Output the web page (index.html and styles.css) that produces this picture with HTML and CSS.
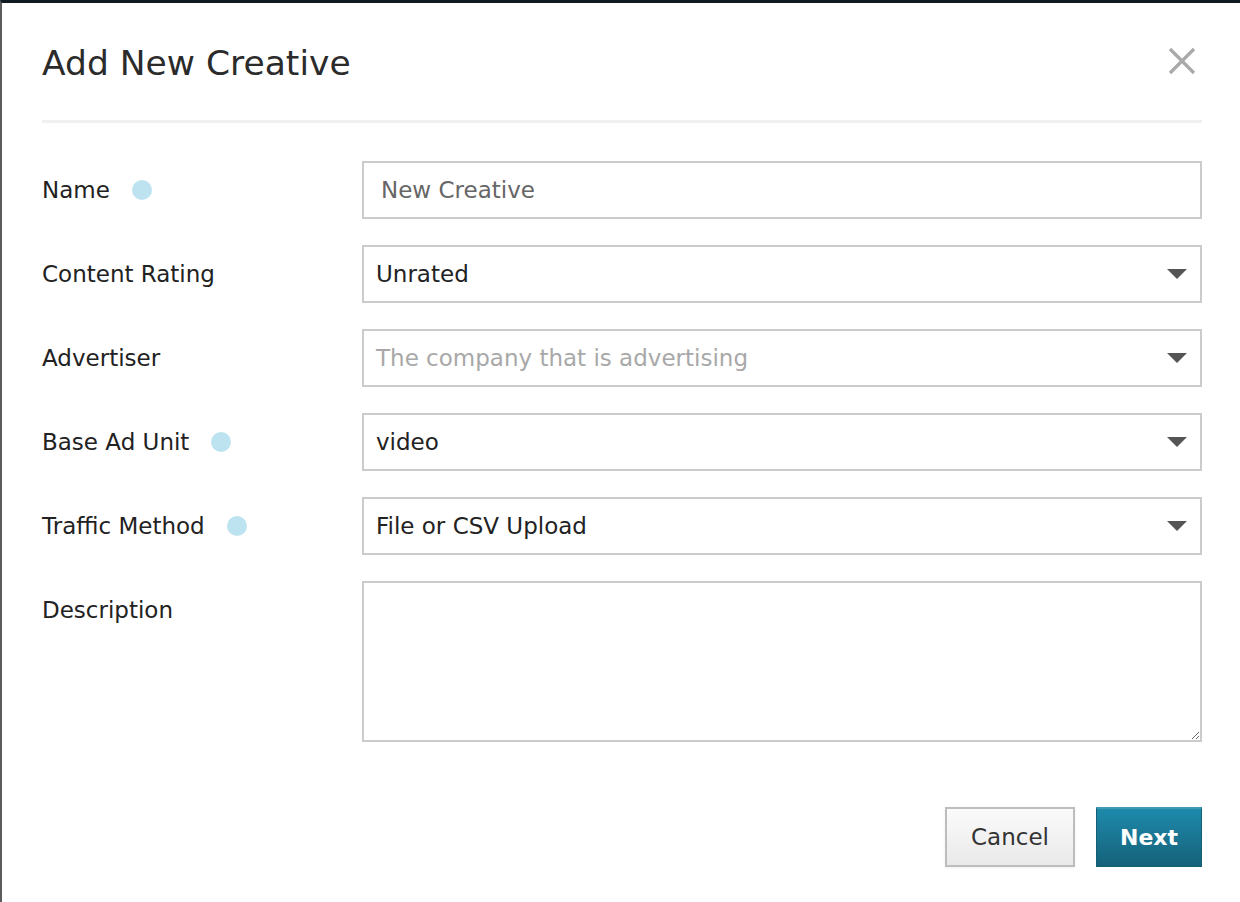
FILE: index.html
```html
<!DOCTYPE html>
<html lang="en">
<head>
<meta charset="utf-8">
<title>Add New Creative</title>
<link rel="stylesheet" href="styles.css">
</head>
<body>
<div class="modal">
  <header class="modal-header">
    <h1 class="modal-title">Add New Creative</h1>
    <button class="close" aria-label="Close">
      <svg width="28" height="28" viewBox="0 0 28 28"><path d="M2 2L26 26M26 2L2 26" stroke="#a9a9a9" stroke-width="3.2" fill="none"/></svg>
    </button>
  </header>
  <form class="form">
    <label class="label">Name <span class="dot"></span></label>
    <input class="input" type="text" value="New Creative">

    <label class="label">Content Rating</label>
    <div class="select"><span>Unrated</span><svg class="caret" width="20" height="10" viewBox="0 0 20 10"><path d="M0 0H20L10 10Z" fill="#555"/></svg></div>

    <label class="label">Advertiser</label>
    <div class="select placeholder"><span>The company that is advertising</span><svg class="caret" width="20" height="10" viewBox="0 0 20 10"><path d="M0 0H20L10 10Z" fill="#555"/></svg></div>

    <label class="label">Base Ad Unit <span class="dot"></span></label>
    <div class="select"><span>video</span><svg class="caret" width="20" height="10" viewBox="0 0 20 10"><path d="M0 0H20L10 10Z" fill="#555"/></svg></div>

    <label class="label">Traffic Method <span class="dot"></span></label>
    <div class="select"><span>File or CSV Upload</span><svg class="caret" width="20" height="10" viewBox="0 0 20 10"><path d="M0 0H20L10 10Z" fill="#555"/></svg></div>

    <label class="label label-top">Description</label>
    <textarea class="textarea"></textarea>
  </form>
  <footer class="modal-footer">
    <button class="btn btn-default" type="button">Cancel</button>
    <button class="btn btn-primary" type="button">Next</button>
  </footer>
</div>
</body>
</html>
```
FILE: styles.css
```css
html, body {
  margin: 0;
  padding: 0;
  background: #ffffff;
  height: 100%;
}
body {
  font-family: "DejaVu Sans", "Liberation Sans", sans-serif;
  color: #222;
  border-top: 3px solid #0f1b21;
  border-left: 2px solid #5c5c5c;
  box-sizing: border-box;
  overflow: hidden;
}
.modal {
  padding: 0 38px 0 40px;
}
.modal-header {
  display: flex;
  align-items: center;
  justify-content: space-between;
  height: 117px;
  border-bottom: 3px solid #f0f0f0;
  box-sizing: content-box;
}
.modal-title {
  margin: 0;
  font-weight: normal;
  font-size: 34.5px;
  color: #2b2b2b;
  padding-top: 2px;
}
.close {
  border: 0;
  background: none;
  padding: 0;
  margin-right: 6px;
  margin-bottom: 2px;
  display: flex;
}
.form {
  display: grid;
  grid-template-columns: 320px 1fr;
  grid-auto-rows: 58px;
  row-gap: 26px;
  margin-top: 38px;
}
.label {
  display: flex;
  align-items: center;
  font-size: 23px;
  color: #222;
}
.label-top {
  align-self: start;
  height: 58px;
}
.dot {
  display: inline-block;
  width: 20px;
  height: 20px;
  border-radius: 50%;
  background: #bce3ef;
  margin-left: 22px;
}
.input, .select, .textarea {
  box-sizing: border-box;
  border: 2px solid #cbcbcb;
  background: #fff;
  font-family: inherit;
  font-size: 23px;
  margin: 0;
}
.input {
  height: 58px;
  padding: 0 17px;
  color: #666;
  outline: none;
}
.select {
  display: flex;
  align-items: center;
  justify-content: space-between;
  padding: 0 13px 0 12px;
  color: #222;
}
.select.placeholder {
  color: #a8a8a8;
}
.textarea {
  grid-row: span 2;
  height: 161px;
  resize: both;
  outline: none;
}
.modal-footer {
  display: flex;
  justify-content: flex-end;
  gap: 21px;
  margin-top: 84px;
}
.btn {
  height: 60px;
  font-family: inherit;
  font-size: 23px;
  cursor: pointer;
  box-sizing: border-box;
}
.btn-default {
  width: 130px;
  color: #333;
  border: 2px solid #bdbdbd;
  background: linear-gradient(#fbfbfb, #e9e9e9);
  box-shadow: 0 1px 3px rgba(0,0,0,0.06);
}
.btn-primary {
  width: 106px;
  color: #fff;
  font-weight: bold;
  font-size: 22px;
  border: 1px solid #145f76;
  border-top: 2px solid #3e9ab5;
  background: linear-gradient(#1e8aab, #156179);
}
```
